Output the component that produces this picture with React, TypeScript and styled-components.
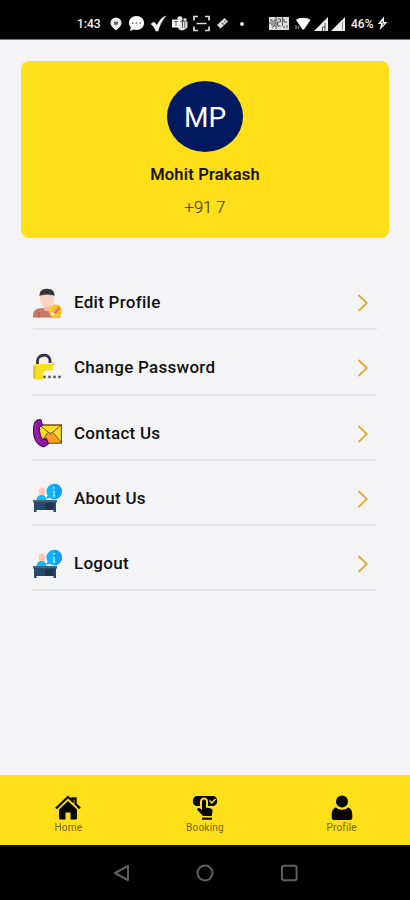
import React from "react";
import styled, { createGlobalStyle } from "styled-components";

const GlobalStyle = createGlobalStyle`
  * { box-sizing: border-box; }
  body { margin: 0; background: #f4f4f7; font-family: Roboto, "Liberation Sans", sans-serif; }
  svg { display: block; flex: none; }
`;

const Screen = styled.div`
  width: 410px;
  height: 900px;
  display: flex;
  flex-direction: column;
  background: #f4f4f7;
  overflow: hidden;
`;

const StatusBar = styled.header`
  height: 40px;
  padding: 8px 0 0 77px;
  display: flex;
  align-items: center;
  background: #000;
  border-bottom: 1px solid #77787a;
  color: #f4f4f4;
`;

const StatusText = styled.span<{ $width: number }>`
  width: ${(p) => p.$width}px;
  font-size: 12px;
  font-weight: 500;
  line-height: 16px;
  white-space: nowrap;
`;

const StatusIcons = styled.div<{ $gap: number; $left: number }>`
  display: flex;
  align-items: center;
  gap: ${(p) => p.$gap}px;
  margin-left: ${(p) => p.$left}px;
`;

const ProfileCard = styled.section`
  height: 177px;
  margin: 20.500px 21px 0;
  padding-top: 20px;
  display: flex;
  flex-direction: column;
  align-items: center;
  border-radius: 8px;
  background: #ffdf1a;
`;

const Avatar = styled.div`
  width: 76px;
  height: 71px;
  display: grid;
  place-items: center;
  border-radius: 50%;
  background: #03195f;
  color: #fff;
  font-size: 28px;
  padding-top: 2px;
`;

const UserName = styled.h1`
  margin: 12px 0 0;
  font-size: 16.500px;
  line-height: 22px;
  font-weight: 500;
  letter-spacing: 0.22px;
  color: #171500;
  -webkit-text-stroke: 0.2px #171500;
`;

const Phone = styled.p`
  margin: 12px 0 0;
  font-size: 16.500px;
  line-height: 20px;
  font-weight: 300;
  color: #4a4108;
  -webkit-text-stroke: 0.2px #4a4108;
`;

const Menu = styled.nav`
  margin: 27.500px 33px 0;
  flex: 1;
`;

const MenuRow = styled.a`
  height: 65.25px;
  display: flex;
  align-items: center;
  padding: 13px 8px 0 0;
  border-bottom: 2px solid #e3e4e7;
`;

const MenuLabel = styled.span`
  flex: 1;
  margin: -2px 0 0 12px;
  font-size: 17px;
  line-height: 22px;
  font-weight: 500;
  letter-spacing: 0.27px;
  color: #111;
`;

const TabBar = styled.nav`
  height: 70px;
  padding-top: 20px;
  display: grid;
  grid-template-columns: repeat(3, 1fr);
  background: #ffdf1a;
`;

const Tab = styled.a`
  display: flex;
  flex-direction: column;
  align-items: center;
`;

const TabLabel = styled.span`
  font-size: 10px;
  line-height: 12px;
  letter-spacing: 0.22px;
  margin-top: 1px;
  color: #75670f;
`;

const SystemBar = styled.footer`
  height: 55px;
  display: flex;
  justify-content: center;
  align-items: center;
  gap: 66px;
  background: #000;
`;

const LocationIcon = () => (
  <svg width="12" height="14" viewBox="0 0 12 14">
    <path d="M6 .5a5.5 5.5 0 0 1 5.5 5.5C11.500 9 8 11.500 6 13.500 4 11.500.5 9 .5 6A5.500 5.500 0 0 1 6 .5Z" fill="#eee" />
    <path d="M4 4.500h4v3H6.500L5 9V7.500H4Z" fill="#666" />
  </svg>
);
const ChatIcon = () => (
  <svg width="17" height="17" viewBox="0 0 17 17">
    <path d="M8.500 1C13 1 16 4 16 8s-3 7-7.500 7c-1 0-2-.2-2.800-.5L2 16l.8-3.500C1.600 11.300 1 9.800 1 8c0-4 3-7 7.500-7Z" fill="#fff" />
    <path d="M4 8h1.500m2.200 0h1.600m2.200 0H13" stroke="#777" strokeWidth="1.500" />
  </svg>
);
const CheckIcon = () => (
  <svg width="16" height="17" viewBox="0 0 16 17">
    <path d="m1 9 3-2 3 3.500C9 6 11.500 3 15.500 1 12 5.500 9.500 10 8 16H6C5 13 3.500 11 1 9Z" fill="#fff" stroke="#fff" strokeWidth=".6" />
  </svg>
);
const TeamsIcon = () => (
  <svg width="16" height="15" viewBox="0 0 16 15">
    <circle cx="8" cy="2.700" r="2.500" fill="#eee" />
    <circle cx="13" cy="3.700" r="1.800" fill="#ccc" />
    <path d="M6 5.500h9.500V10c0 2-1 3-2.500 3-1 2-6 2-7-1Z" fill="#ddd" />
    <path d="M0 3.500h8v8H0Z" fill="#f7f7f7" />
    <path d="M2 5.500h4M4 5.500V10M10.500 6v6M12.800 6v6" stroke="#666" strokeWidth="1" />
  </svg>
);
const ScanIcon = () => (
  <svg width="17" height="17" viewBox="0 0 17 17" fill="none" stroke="#ddd" strokeWidth="1.700">
    <path d="M1 5.500V1.500h4M12 1.500h4v4M16 11.500v4h-4M5 15.500H1v-4M3.500 8.500h10" />
  </svg>
);
const TagIcon = () => (
  <svg width="13" height="13" viewBox="0 0 13 13">
    <path d="m8.500 1 3.500 3.500-7.500 7L1 8Z" fill="#ddd" />
    <path d="m8.500 4 1 1M6 6l1.500 1.500" stroke="#444" strokeWidth="1.200" />
  </svg>
);
const NetworkIcon = () => (
  <svg width="20" height="13" viewBox="0 0 20 13">
    <rect width="20" height="13" fill="#ddd" />
    <path d="M2 2v2h4V2M2 8h4l-3 3M8.500 2h3v3h-3v4h3M15 2v3h3M15 9v2M18 8v3M0 6h7M7 0v12M13.500 0v9" fill="none" stroke="#444" strokeWidth=".9" />
  </svg>
);
const WifiIcon = () => (
  <svg width="16" height="13" viewBox="0 0 16 13">
    <path d="M1 3C4 0 12 0 15.500 3L9 12.500H7.500Z" fill="#fff" />
    <path d="M1 8v4M3.200 9v3" stroke="#888" strokeWidth="1.300" />
  </svg>
);
const SignalIcon = ({ notch = false }: { notch?: boolean }) => (
  <svg width="14" height="14" viewBox="0 0 14 14">
    <path d="M0 14 14 0v14Z" fill="#eee" />
    {notch ? <path d="M8.500 10h3M8.500 10v4M11 6v8" stroke="#555" /> : <path d="M11.500 5v8" stroke="#888" />}
  </svg>
);
const ChargeIcon = () => (
  <svg width="11" height="15" viewBox="0 0 11 15">
    <path d="M7 .5.800 8H4l-1.300 6L10.500 6H7Z" fill="#fff" />
    <path d="M5.800 4.500 4 6.800h2l-.5 3L7.500 7.500H5.500Z" fill="#222" />
  </svg>
);

const EditProfileArt = () => (
  <svg width="29" height="31" viewBox="0 0 29 31">
    <path d="M0 28c0-6 3-7.500 9-8h6c6 0 12 2 12 8v1.500H0Z" fill="#c77861" />
    <path d="M6 24v5.500" stroke="#ad604e" />
    <path d="M10.500 16h7v5c-2 3-5 3-7 0Z" fill="#f0bba8" />
    <path d="M7 7c3-2.500 11-2.500 14 0v4c0 5-3 8-7 8s-7-3-7-8Z" fill="#fbd4c5" />
    <path d="M6.500 8C6.500 3 9 1 14 .8c5 .2 7.500 2.200 7.500 7.200-3-2-12-2-15 0Z" fill="#343235" />
    <path d="M9 7c3-1 7-1 10 0" stroke="#6e6863" fill="none" />
    <circle cx="22.300" cy="23" r="6.700" fill="#ffc925" />
    <path d="m18.500 27 1-3.500 5.500-5.500 2.500 2.500-5.500 5.500Z" fill="#ed6541" />
    <path d="m20 24.500 5-5M18.500 27l1-3 2 2Z" stroke="#fff2d5" fill="#fff2d5" />
  </svg>
);
const PasswordArt = () => (
  <svg width="29" height="31" viewBox="0 0 29 31">
    <path d="M4.500 12V8c0-7 12-8 12.500-1v3" fill="none" stroke="#343840" strokeWidth="2.800" />
    <path d="m18.500 8 4 3.500-3 .5Z" fill="#f2afc0" />
    <path d="M3 11h17v6.500h-6c-3 0-4 2-4 4.500v4.500H3c-2 0-3-1-3-3V14c0-2 1-3 3-3Z" fill="#f6df25" />
    <path d="M1.500 13v12" stroke="#dec11c" strokeWidth="2" />
    <g fill="#575b62">
      <circle cx="11.500" cy="24" r="1.400" />
      <circle cx="16.500" cy="24" r="1.400" />
      <circle cx="21.500" cy="24" r="1.400" />
      <circle cx="26.500" cy="24" r="1.400" />
    </g>
  </svg>
);
const ContactArt = () => (
  <svg width="29" height="31" viewBox="0 0 29 31">
    <path d="M6 7h22.500v18H9C6 18 6 14 6 7Z" fill="#ffda29" stroke="#69531a" strokeWidth="1.300" />
    <path d="m7 24 9-10h3l9 10.500H8Z" fill="#ff9c20" />
    <path d="m6.500 7 11 9 11-9M8 24l7-9.500M28 24l-8-9.500" fill="none" stroke="#6f5b12" />
    <path d="m4 2 4-.500 1.500 6L6.500 9c-.500 5 .800 9 3 12.500l4-1 2 5.500-4.500 3C5 28 0 22 .5 11 .7 6 2 3 4 2Z" fill="#8c16a6" stroke="#3b0b49" />
    <path d="M3 5c-1 6 0 14 4 18" fill="none" stroke="#b02bc0" />
  </svg>
);
const InfoDeskArt = () => (
  <svg width="29" height="31" viewBox="0 0 29 31">
    <ellipse cx="9" cy="8.500" rx="3.300" ry="4" fill="#ffc9ac" />
    <path d="M3.500 18c0-4 1.500-6 5-6s5 2 5 6Z" fill="#18b9f0" />
    <path d="M0 17h24v2.500h-1V29h-2.500v-2H3.500v2H1V19.500H0Z" fill="#29496a" />
    <path d="M12 20h8.500v7H12Z" fill="#203650" />
    <path d="M0 17h24v2H0Z" fill="#45637d" />
    <path d="m15 12-2 4 6-2Z" fill="#139bed" />
    <circle cx="21.200" cy="8.500" r="7.800" fill="#12b7fb" />
    <path d="M21.200.7a7.800 7.800 0 0 1 0 15.600Z" fill="#0aa0f4" />
    <path d="M21.200 8v5M20 8h1.200M20 13h2.500" stroke="#a0e5ff" strokeWidth="1.400" />
    <circle cx="21.200" cy="4.800" r="1" fill="#b5ecff" />
  </svg>
);
const Chevron = () => (
  <svg width="12" height="20" viewBox="0 0 12 20">
    <path d="m1.500 2 8.300 8-8.300 8" fill="none" stroke="#dfac2b" strokeWidth="1.800" />
  </svg>
);

const HomeIcon = () => (
  <svg width="26" height="26" viewBox="0 0 26 26">
    <path d="M1 13.500 13 2l4.500 4V3.500h3v5.300L25 13.500" fill="none" stroke="#080800" strokeWidth="2.300" />
    <path d="m13 6 9 8.500V23q0 1.500-1.500 1.500h-5v-7h-5v7h-5Q4 24.500 4 23v-8.500Z" fill="#080800" />
  </svg>
);
const BookingIcon = () => (
  <svg width="26" height="26" viewBox="0 0 26 26">
    <path d="M5 1h16C26.500 1 26.500 11 21 11h-5V6.500c0-5.500-8-5.500-8 0V11H5C-.5 11-.5 1 5 1Z" fill="#080800" />
    <path d="m17.500 5.500 2.300 2.500L23.500 4" fill="none" stroke="#ffdf1a" strokeWidth="1.500" />
    <path d="M10 6.500c0-2.700 4-2.700 4 0v6l4 .8q3 .500 2.500 3l-.7 4.700H11l-6-6.500q1-2.500 3.500-.8L10 15Z" fill="#080800" />
    <path d="M10 23.700h10" stroke="#080800" strokeWidth="2.200" />
  </svg>
);
const PersonIcon = () => (
  <svg width="26" height="26" viewBox="0 0 26 26" fill="#080800">
    <circle cx="13" cy="6.500" r="6" />
    <path d="M7 12.500c3 3 9 3 12 0 3 .7 4.300 3.500 4.300 8V22.500q0 2.500-2.500 2.500H5.200Q2.700 25 2.700 22.500v-2c0-4.500 1.300-7.300 4.300-8Z" />
  </svg>
);

const menuItems = [
  { label: "Edit Profile", Art: EditProfileArt },
  { label: "Change Password", Art: PasswordArt },
  { label: "Contact Us", Art: ContactArt },
  { label: "About Us", Art: InfoDeskArt },
  { label: "Logout", Art: InfoDeskArt },
];
const tabs = [
  { label: "Home", Icon: HomeIcon },
  { label: "Booking", Icon: BookingIcon },
  { label: "Profile", Icon: PersonIcon },
];

export default function App() {
  return (
    <>
      <GlobalStyle />
      <Screen>
        <StatusBar>
          <StatusText $width={24}>1:43</StatusText>
          <StatusIcons $gap={5.5} $left={9}>
            <LocationIcon /><ChatIcon /><CheckIcon /><TeamsIcon /><ScanIcon /><TagIcon />
            <svg width="14" height="6" viewBox="0 0 14 6"><circle cx="8" cy="3" r="2" fill="#ddd" /></svg>
          </StatusIcons>
          <StatusIcons $gap={3} $left={21}>
            <NetworkIcon />
            <StatusIcons $gap={3} $left={3}><WifiIcon /><SignalIcon notch /><SignalIcon /></StatusIcons>
          </StatusIcons>
          <StatusIcons $gap={1} $left={6}>
            <StatusText $width={25}>46%</StatusText><ChargeIcon />
          </StatusIcons>
        </StatusBar>
        <ProfileCard>
          <Avatar>MP</Avatar>
          <UserName>Mohit Prakash</UserName>
          <Phone>+91 7</Phone>
        </ProfileCard>
        <Menu>
          {menuItems.map(({ label, Art }) => (
            <MenuRow key={label}><Art /><MenuLabel>{label}</MenuLabel><Chevron /></MenuRow>
          ))}
        </Menu>
        <TabBar>
          {tabs.map(({ label, Icon }) => (
            <Tab key={label}><Icon /><TabLabel>{label}</TabLabel></Tab>
          ))}
        </TabBar>
        <SystemBar>
          <svg width="18" height="18" viewBox="0 0 18 18"><path d="M16 2v14L3 9Z" fill="none" stroke="#606060" strokeWidth="2" strokeLinejoin="round" /></svg>
          <svg width="18" height="18" viewBox="0 0 18 18"><circle cx="9" cy="9" r="7.500" fill="none" stroke="#606060" strokeWidth="2" /></svg>
          <svg width="18" height="18" viewBox="0 0 18 18"><rect x="2" y="1.700" width="14.600" height="14.600" rx="2" fill="none" stroke="#606060" strokeWidth="2" /></svg>
        </SystemBar>
      </Screen>
    </>
  );
}
